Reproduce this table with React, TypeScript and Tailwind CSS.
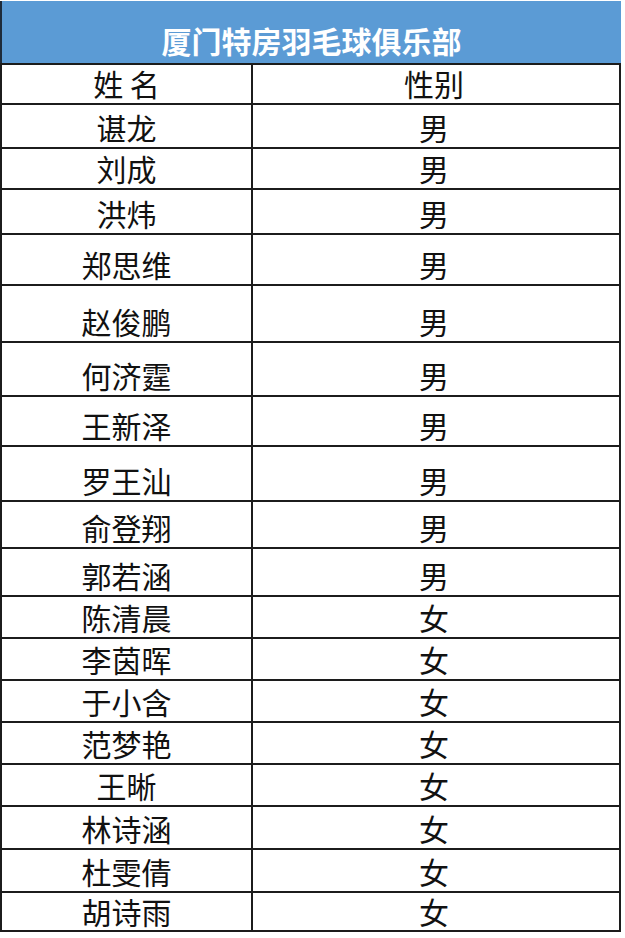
import * as React from "react";

const members: [string, string, number][] = [
  ["谌龙", "男", 44],
  ["刘成", "男", 41],
  ["洪炜", "男", 45],
  ["郑思维", "男", 51],
  ["赵俊鹏", "男", 57],
  ["何济霆", "男", 54],
  ["王新泽", "男", 50],
  ["罗王汕", "男", 55],
  ["俞登翔", "男", 47],
  ["郭若涵", "男", 48],
  ["陈清晨", "女", 42],
  ["李茵晖", "女", 42],
  ["于小含", "女", 42],
  ["范梦艳", "女", 42],
  ["王晰", "女", 42],
  ["林诗涵", "女", 43],
  ["杜雯倩", "女", 43],
  ["胡诗雨", "女", 41],
];

function Row({ name, gender, height, last }: { name: string; gender: string; height: number; last?: boolean }) {
  return (
    <div
      className={`grid grid-cols-[251px_1fr] border-t-2 border-[#1c1c1c] ${last ? "border-b-2" : ""}`}
      style={{ height }}
    >
      <div className="flex items-end justify-center border-r-2 border-[#1c1c1c] pb-[2px] leading-[36px]">
        {name}
      </div>
      <div className="flex items-end justify-center pb-[2px] pr-[4px] leading-[36px]">{gender}</div>
    </div>
  );
}

export default function App() {
  return (
    <div
      className="w-[625px] h-[938px] bg-white text-[30px] text-[#111]"
      style={{ fontFamily: '"Noto Sans CJK SC", "Noto Sans", sans-serif' }}
    >
      <div className="w-[621px]">
        {/* title bar */}
        <div className="mt-[1px] h-[62px] bg-[#5b9bd5] border-l-2 border-[#1e2b3a] flex items-end justify-center pb-[5px] text-white font-bold leading-[36px]">
          厦门特房羽毛球俱乐部
        </div>

        <div className="border-l-2 border-r-2 border-[#1c1c1c]">
          <Row name="姓 名" gender="性别" height={40} />
          {members.map(([name, gender, h], i) => (
            <Row key={name} name={name} gender={gender} height={h} last={i === members.length - 1} />
          ))}
        </div>
      </div>
    </div>
  );
}
